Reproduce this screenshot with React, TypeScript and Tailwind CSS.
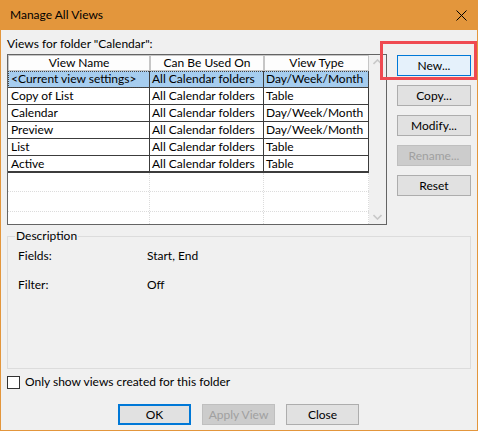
import React from 'react';

type ViewRow = { name: string; usedOn: string; type: string };

const VIEWS: ViewRow[] = [
  { name: '<Current view settings>', usedOn: 'All Calendar folders', type: 'Day/Week/Month' },
  { name: 'Copy of List', usedOn: 'All Calendar folders', type: 'Table' },
  { name: 'Calendar', usedOn: 'All Calendar folders', type: 'Day/Week/Month' },
  { name: 'Preview', usedOn: 'All Calendar folders', type: 'Day/Week/Month' },
  { name: 'List', usedOn: 'All Calendar folders', type: 'Table' },
  { name: 'Active', usedOn: 'All Calendar folders', type: 'Table' },
];

type ButtonKind = 'normal' | 'focused' | 'default' | 'disabled';

const buttonStyles: Record<ButtonKind, string> = {
  normal: 'border border-[#adadad] bg-[#e1e1e1] text-black',
  focused: 'border border-[#0078d7] bg-[#e5f1fb] text-black',
  default: 'border-2 border-[#0078d7] bg-[#e1e1e1] text-black',
  disabled: 'border border-[#bfbfbf] bg-[#cccccc] text-[#a0a0a0]',
};

const DlgButton: React.FC<{ label: string; kind?: ButtonKind; width?: string }> = ({ label, kind = 'normal', width = 'w-[74px]' }) => (
  <button type="button" className={`${width} h-[21px] flex items-center justify-center text-[12px] leading-none ${buttonStyles[kind]}`}>
    {label}
  </button>
);

const Chevron: React.FC<{ up?: boolean }> = ({ up }) => (
  <svg width="9" height="6" viewBox="0 0 9 6" className="block">
    <path d={up ? 'M0.5 5 L4.5 1 L8.5 5' : 'M0.5 1 L4.5 5 L8.5 1'} fill="none" stroke="#c8c8c8" strokeWidth="1.6" />
  </svg>
);

const ViewsList: React.FC = () => (
  <div className="w-[380px] h-[171px] border border-[#646464] bg-white flex">
    <div className="w-[361px] flex flex-col">
      {/* column headers */}
      <div className="flex h-[16px] shrink-0">
        <div className="w-[142px] border border-[#c6c6c6] bg-[#fdfdfd] flex items-center justify-center">View Name</div>
        <div className="w-[114px] border border-[#c6c6c6] bg-[#fdfdfd] flex items-center justify-center">Can Be Used On</div>
        <div className="w-[105px] border border-[#c6c6c6] bg-[#fdfdfd] flex items-center justify-center">View Type</div>
      </div>
      {VIEWS.map((v, i) => {
        const selected = i === 0;
        const last = i === VIEWS.length - 1;
        return (
          <div
            key={v.name}
            className={`flex h-[17px] shrink-0 ${last ? 'border-b-2' : 'border-b'} border-[#3c3c3c] ${selected ? 'bg-[#a6cdef] outline-1 outline-dotted outline-offset-[-1px] outline-[#444]' : ''}`}
          >
            <div className="w-[142px] pl-[3px] border-r border-[#3c3c3c] flex items-center whitespace-nowrap overflow-hidden">{v.name}</div>
            <div className="w-[114px] pl-[2px] border-r border-[#3c3c3c] flex items-center whitespace-nowrap overflow-hidden">{v.usedOn}</div>
            <div className="w-[105px] pl-[2px] border-r border-[#3c3c3c] flex items-center whitespace-nowrap overflow-hidden">{v.type}</div>
          </div>
        );
      })}
      {/* blank grid rows */}
      {[0, 1].map(n => (
        <div key={n} className={`flex shrink-0 ${n === 0 ? 'h-[19px]' : 'h-[20px]'} border-b border-dotted border-[#dcdcdc]`}>
          <div className="w-[142px] border-r border-dotted border-[#dcdcdc]" />
          <div className="w-[114px] border-r border-dotted border-[#dcdcdc]" />
          <div className="w-[105px] border-r border-dotted border-[#dcdcdc]" />
        </div>
      ))}
      <div className="flex flex-1">
        <div className="w-[142px] border-r border-dotted border-[#dcdcdc]" />
        <div className="w-[114px] border-r border-dotted border-[#dcdcdc]" />
        <div className="w-[105px] border-r border-dotted border-[#dcdcdc]" />
      </div>
    </div>
    {/* disabled vertical scrollbar */}
    <div className="w-[17px] bg-[#f0f0f0] flex flex-col items-center justify-between py-[4px]">
      <Chevron up />
      <Chevron />
    </div>
  </div>
);

export default function App() {
  return (
    <div className="relative w-[478px] h-[431px] flex flex-col border-x border-b border-[#e3963c] bg-[#f0f0f0] text-[12px] leading-[16px] text-black font-['Lato',sans-serif]">
      {/* title bar */}
      <div className="h-[30px] shrink-0 -mx-px bg-[#e3963c] flex items-center justify-between pl-[10px] pr-[11px]">
        <span className="text-[12px]">Manage All Views</span>
        <svg width="11" height="11" viewBox="0 0 11 11">
          <path d="M0.5 0.5 L10.5 10.5 M10.5 0.5 L0.5 10.5" stroke="#000" strokeWidth="1" />
        </svg>
      </div>

      <div className="flex flex-col px-[6px] pt-[6px]">
        <div>Views for folder "Calendar":</div>
        <div className="flex mt-[2px]">
          <ViewsList />
          <div className="ml-[10px] mt-[1px] flex flex-col gap-[9px]">
            <DlgButton label="New..." kind="focused" />
            <DlgButton label="Copy..." />
            <DlgButton label="Modify..." />
            <DlgButton label="Rename..." kind="disabled" />
            <DlgButton label="Reset" />
          </div>
        </div>

        <fieldset className="mt-[3px] w-[464px] h-[141px] border border-[#dcdcdc] px-[10px]">
          <legend className="-ml-[3px] px-[1px]">Description</legend>
          <div className="grid grid-cols-[129px_1fr] gap-y-[13px] mt-[4px]">
            <span>Fields:</span>
            <span>Start, End</span>
            <span>Filter:</span>
            <span>Off</span>
          </div>
        </fieldset>

        <label className="flex items-center gap-[5px] mt-[5px] h-[16px]">
          <span className="w-[13px] h-[13px] border border-[#333] bg-white shrink-0" />
          <span>Only show views created for this folder</span>
        </label>

        <div className="flex gap-[11px] ml-[111px] mt-[14px]">
          <DlgButton label="OK" kind="default" width="w-[73px]" />
          <DlgButton label="Apply View" kind="disabled" width="w-[73px]" />
          <DlgButton label="Close" width="w-[73px]" />
        </div>
      </div>

      {/* highlight around the New button */}
      <div className="absolute left-[379px] top-[41px] w-[97px] h-[39px] border-[3px] border-[#ef4a51] pointer-events-none" />
    </div>
  );
}
